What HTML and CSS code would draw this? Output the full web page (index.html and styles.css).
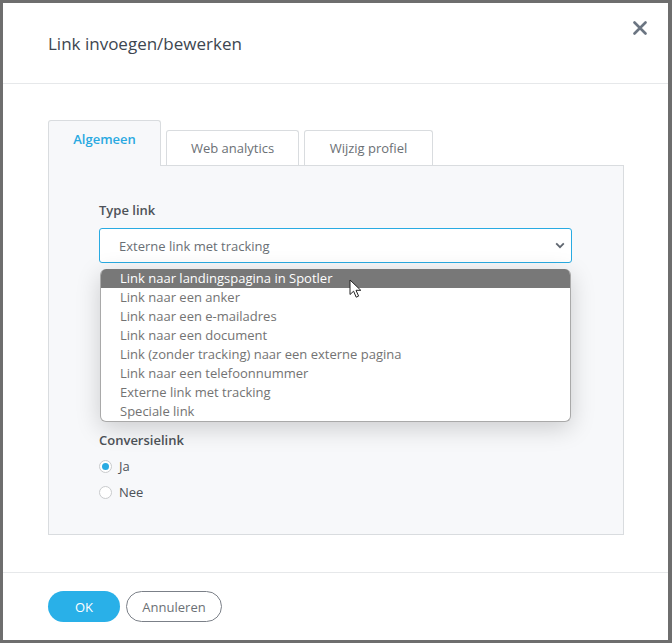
FILE: index.html
```html
<!doctype html>
<html lang="nl">
  <head>
    <meta charset="UTF-8" />
    <meta name="viewport" content="width=device-width, initial-scale=1.0" />
    <title>Link invoegen/bewerken</title>
    <link rel="stylesheet" href="styles.css">
  </head>
  <body>
    <div class="backdrop">
      <div class="modal">
        <header class="modal-header">
          <h2>Link invoegen/bewerken</h2>
          <button class="close" aria-label="Sluiten">
            <svg width="14" height="14" viewBox="0 0 14 14">
              <path d="M1.5 1.5 L12.5 12.5 M12.5 1.5 L1.5 12.5" stroke="#6b7582" stroke-width="2.6" stroke-linecap="round" fill="none" />
            </svg>
          </button>
        </header>

        <div class="modal-body">
          <ul class="tabs">
            <li class="tab active">Algemeen</li>
            <li class="tab">Web analytics</li>
            <li class="tab">Wijzig profiel</li>
          </ul>

          <div class="tab-panel">
            <div class="form-group">
              <label>Type link</label>
              <div class="select-wrap">
                <div class="select">
                  <span>Externe link met tracking</span>
                  <svg width="10" height="7" viewBox="0 0 10 7">
                    <path d="M1.2 1.4 L5 5.2 L8.8 1.4" stroke="#5f6670" stroke-width="1.8" fill="none" />
                  </svg>
                </div>
                <ul class="options">
                  <li class="selected">Link naar landingspagina in Spotler</li>
                  <li>Link naar een anker</li>
                  <li>Link naar een e-mailadres</li>
                  <li>Link naar een document</li>
                  <li>Link (zonder tracking) naar een externe pagina</li>
                  <li>Link naar een telefoonnummer</li>
                  <li>Externe link met tracking</li>
                  <li>Speciale link</li>
                </ul>
                <svg class="cursor" width="14" height="20" viewBox="0 0 14 20">
                  <path d="M1 1 L1 15.5 L4.6 12.2 L7.2 18.2 L9.6 17.1 L7 11.3 L11.8 11.3 Z" fill="#fff" stroke="#222" stroke-width="1" stroke-linejoin="round" />
                </svg>
              </div>
            </div>

            <div class="hidden-fields"></div>

            <div class="form-group">
              <label>Conversielink</label>
              <div class="radio checked"><span class="dot"></span>Ja</div>
              <div class="radio"><span class="dot"></span>Nee</div>
            </div>
          </div>
        </div>

        <footer class="modal-footer">
          <button class="btn btn-primary">OK</button>
          <button class="btn btn-outline">Annuleren</button>
        </footer>
      </div>
    </div>
  </body>
</html>
```

FILE: styles.css
```css
body {
  margin: 0;
  font-family: "Open Sans", Arial, sans-serif;
  font-size: 13px;
  background-color: #6e6e6e;
}

.backdrop {
  padding: 3px 4px 3px 3px;
  height: 643px;
  box-sizing: border-box;
}

.modal {
  background-color: white;
  height: 637px;
  display: flex;
  flex-direction: column;
}

.modal-header {
  height: 80px;
  border-bottom: 1px solid #e6e8ea;
  display: flex;
  align-items: center;
  padding: 0 22px 0 45px;
  position: relative;
}

.modal-header h2 {
  margin: 0;
  font-weight: 400;
  font-size: 17px;
  color: #3d4650;
}

.close {
  position: absolute;
  top: 18px;
  right: 21px;
  border: none;
  background: none;
  padding: 0;
  cursor: pointer;
}

.modal-body {
  flex: 1;
  padding: 36px 44px 0 45px;
}

.tabs {
  list-style: none;
  margin: 0;
  padding: 0;
  display: flex;
  align-items: flex-end;
  gap: 5px;
  position: relative;
  z-index: 1;
}

.tab {
  height: 35px;
  box-sizing: border-box;
  border: 1px solid #d9dcdf;
  border-bottom: none;
  border-radius: 3px 3px 0 0;
  background-color: white;
  color: #6b7075;
  display: flex;
  align-items: center;
  justify-content: center;
}

.tab:nth-child(2) {
  width: 133px;
}

.tab:nth-child(3) {
  width: 129px;
}

.tab.active {
  width: 113px;
  height: 46px;
  background-color: #f7f8fa;
  color: #29a9e1;
  font-weight: 600;
  padding-bottom: 9px;
  margin-bottom: -1px;
}

.tab-panel {
  height: 370px;
  box-sizing: border-box;
  border: 1px solid #d9dcdf;
  background-color: #f7f8fa;
  padding: 35px 51px 0 50px;
}

.form-group label {
  display: block;
  font-weight: 600;
  color: #4d5258;
  line-height: 18px;
  margin-bottom: 9px;
}

.select-wrap {
  position: relative;
}

.select {
  height: 35px;
  box-sizing: border-box;
  border: 1px solid #29abe2;
  border-radius: 3px;
  background-color: white;
  display: flex;
  align-items: center;
  justify-content: space-between;
  padding: 0 6px 0 19px;
  color: #6a6f75;
}

.options {
  position: absolute;
  top: 41px;
  left: 1px;
  right: 1px;
  margin: 0;
  padding: 0;
  list-style: none;
  background-color: white;
  border: 1px solid #a9a9a9;
  border-top: none;
  border-radius: 6px;
  overflow: hidden;
  box-shadow: 0 6px 24px rgba(0, 0, 0, 0.18);
  z-index: 2;
}

.options li {
  height: 19px;
  line-height: 19px;
  padding-left: 19px;
  color: #737373;
}

.options li.selected {
  background-color: #787878;
  color: white;
}

.cursor {
  position: absolute;
  top: 51px;
  left: 250px;
  z-index: 3;
}

.hidden-fields {
  height: 168px;
}

.radio {
  display: flex;
  align-items: center;
  height: 26px;
  color: #4d5258;
  margin-top: -5px;
  margin-bottom: 5px;
}

.radio .dot {
  width: 13px;
  height: 13px;
  box-sizing: border-box;
  border: 1px solid #c9cbcd;
  border-radius: 50%;
  background-color: white;
  margin-right: 7px;
  display: flex;
  align-items: center;
  justify-content: center;
}

.radio.checked .dot::after {
  content: "";
  width: 7px;
  height: 7px;
  border-radius: 50%;
  background-color: #29abe2;
}

.modal-footer {
  height: 67px;
  border-top: 1px solid #e6e8ea;
  display: flex;
  align-items: center;
  gap: 6px;
  padding-left: 45px;
}

.btn {
  height: 31px;
  border-radius: 16px;
  font-family: "Open Sans", Arial, sans-serif;
  font-size: 13px;
  cursor: pointer;
}

.btn-primary {
  width: 72px;
  background-color: #29b0e8;
  border: none;
  color: white;
}

.btn-outline {
  width: 96px;
  background-color: white;
  border: 1px solid #7b8088;
  color: #6b7075;
}
```
